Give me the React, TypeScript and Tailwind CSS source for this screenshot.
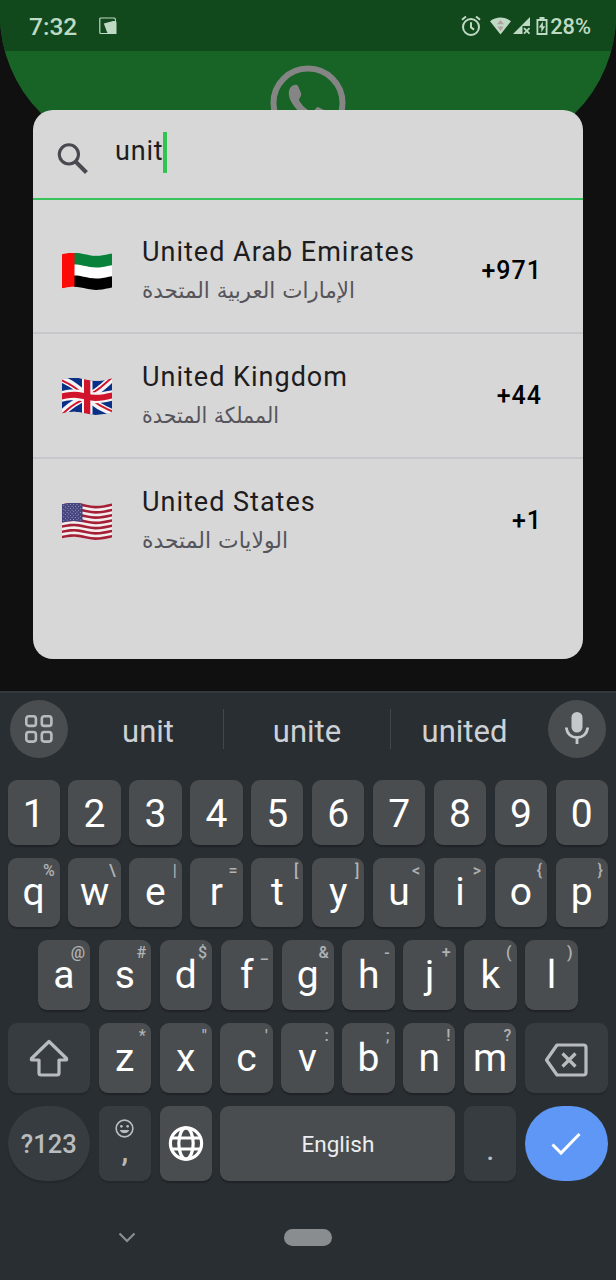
import React from "react";

type Pt = [number, number];

const lift = (x: number) => 1.3 - 1.6 * Math.sin((2 * Math.PI * x) / 46);

function wavy(points: Pt[], closed = true): string {
  const src = closed ? [...points, points[0]] : points;
  const out: string[] = [];
  for (let i = 0; i < src.length - 1; i++) {
    for (let s = 0; s <= 12; s++) {
      const x = src[i][0] + ((src[i + 1][0] - src[i][0]) * s) / 12;
      const y = src[i][1] + ((src[i + 1][1] - src[i][1]) * s) / 12;
      out.push(`${x.toFixed(2)} ${(y + lift(x)).toFixed(2)}`);
    }
  }
  return "M" + out.join("L") + (closed ? "Z" : "");
}

const box = (x: number, y: number, w: number, h: number): string =>
  wavy([[x, y], [x + w, y], [x + w, y + h], [x, y + h]]);

function FlagUAE() {
  return (
    <svg viewBox="0 0 50 38" preserveAspectRatio="none" className="h-[37px] w-[50px]">
      <path d={box(0, 0, 50, 35)} fill="#fff" />
      <path d={box(12, 0, 38, 12)} fill="#08823a" />
      <path d={box(12, 23.3, 38, 11.7)} fill="#000" />
      <path d={box(0, 0, 12.5, 35)} fill="#fb0a08" />
    </svg>
  );
}

function FlagUK() {
  return (
    <svg viewBox="0 0 50 38" preserveAspectRatio="none" className="h-[37px] w-[50px]">
      <clipPath id="uk-cloth"><path d={box(0, 0, 50, 35)} /></clipPath>
      <g clipPath="url(#uk-cloth)" fill="none">
        <path d={box(0, 0, 50, 35)} fill="#0a2f86" />
        <path d={wavy([[0, 0], [50, 35]], false)} stroke="#f4f4f4" strokeWidth="7" />
        <path d={wavy([[50, 0], [0, 35]], false)} stroke="#f4f4f4" strokeWidth="7" />
        <path d={wavy([[0, 1.2], [23, 17.3]], false)} stroke="#d0142c" strokeWidth="2" />
        <path d={wavy([[27, 17.7], [50, 33.8]], false)} stroke="#d0142c" strokeWidth="2" />
        <path d={wavy([[50, -1], [27, 15]], false)} stroke="#d0142c" strokeWidth="2" />
        <path d={wavy([[23, 20], [0, 36]], false)} stroke="#d0142c" strokeWidth="2" />
        <path d={box(0, 12, 50, 11)} fill="#f4f4f4" />
        <path d={box(20, 0, 10.5, 35)} fill="#f4f4f4" />
        <path d={box(0, 14.4, 50, 6.3)} fill="#d0142c" />
        <path d={box(22, 0, 6.3, 35)} fill="#d0142c" />
      </g>
    </svg>
  );
}

function FlagUS() {
  const h = 35 / 13;
  const stars: Pt[] = [];
  for (let r = 0; r < 9; r++)
    for (let c = 0; c < (r % 2 ? 5 : 6); c++) stars.push([1.8 + (r % 2 ? 1.65 : 0) + c * 3.3, 1.6 + r * 1.95]);
  return (
    <svg viewBox="0 0 50 38" preserveAspectRatio="none" className="h-[37px] w-[50px]">
      <path d={box(0, 0, 50, 35)} fill="#f2eeee" />
      {[0, 2, 4, 6, 8, 10, 12].map((i) => (
        <path key={i} d={box(0, i * h, 50, h)} fill="#a51f36" />
      ))}
      <path d={box(0, 0, 20.5, h * 7)} fill="#45457f" />
      {stars.map(([x, y], i) => (
        <circle key={i} cx={x} cy={y + lift(x)} r="0.5" fill="#d5d5e8" />
      ))}
    </svg>
  );
}

function StatusBar() {
  return (
    <div className="flex h-[51px] w-full items-center bg-[#11481c] pt-[3px] text-[#bfdac4]">
      <span className="ml-[29px] w-[70px] text-[24.500px] font-medium leading-none">7:32</span>
      <svg viewBox="0 0 18 18" className="-mt-[2px] h-[18px] w-[18px]" fill="none">
        <rect x="0.800" y="1" width="15.500" height="15.500" rx="1" stroke="currentColor" strokeWidth="1.200" />
        <path d="M4.800 6.500L16 3.500L17.500 5V17H8.800Z" fill="currentColor" />
        <path d="M3 2.800h9l4 .8" stroke="#11481c" strokeWidth="1" />
      </svg>
      <div className="ml-auto mr-[25px] flex items-center">
        <svg viewBox="0 0 20 22" className="-mt-[2px] mr-[9px] h-[22px] w-5" fill="none" stroke="currentColor" strokeWidth="2">
          <circle cx="10" cy="12" r="8" />
          <path d="M10 7.200v5.200l3 2.200M1 4.800L5 1.400M19 4.800L15 1.400" />
        </svg>
        <svg viewBox="0 0 21 18" className="-mt-[2px] mr-[2px] h-[18px] w-[21px]">
          <path d="M0 4.200C6-.8 15-.8 21 4.200L10.500 17.500Z" fill="currentColor" />
          <path d="M10.500 3l3.400 4.200H7.100ZM7.500 9.500h6L10.500 14Z" fill="#b69da2" />
        </svg>
        <svg viewBox="0 0 18 18" className="-mt-[2px] mr-[5px] h-[18px] w-[18px]">
          <path d="M17 0V9H9.500V17H0Z" fill="currentColor" />
          <path d="M11 11.200l5.500 5.500M16.500 11.200L11 16.700" stroke="currentColor" strokeWidth="1.800" />
        </svg>
        <svg viewBox="0 0 12 18" className="-mt-[2px] mr-[2px] h-[18px] w-[12px]">
          <path d="M3.500 0h5v2H11.500v16H0.500V2H3.500Z" fill="currentColor" />
          <path d="M2.300 4h7.400v12H2.300Z" fill="#11481c" />
          <path d="M6.900 4.500L2.800 10.500H5.300V15.500L9.200 9.200H6.900Z" fill="currentColor" />
        </svg>
        <span className="text-[21.800px] font-medium leading-none">28%</span>
      </div>
    </div>
  );
}

interface Country {
  name: string;
  native: string;
  code: string;
  width: string;
  flag: React.ReactNode;
}

const countries: Country[] = [
  { name: "United Arab Emirates", native: "الإمارات العربية المتحدة", code: "+971", width: "213", flag: <FlagUAE /> },
  { name: "United Kingdom", native: "المملكة المتحدة", code: "+44", width: "137", flag: <FlagUK /> },
  { name: "United States", native: "الولايات المتحدة", code: "+1", width: "146", flag: <FlagUS /> },
];

function CountryDialog() {
  return (
    <section className="relative mx-[33px] mt-[59px] h-[549px] overflow-hidden rounded-[20px] bg-[#d7d7d7]">
      <div className="flex h-[90px] items-start border-b-2 border-[#36c35a]">
        <svg viewBox="0 0 30 30" className="ml-[24px] mt-[33px] h-[31px] w-[31px]" fill="none" stroke="#4a4950">
          <circle cx="11.500" cy="11" r="9.300" strokeWidth="3" />
          <path d="M18 18L28.500 28.500" strokeWidth="4" />
        </svg>
        <div className="ml-[27px] mt-[22px] flex h-[41px] items-start">
          <span className="text-[27px] leading-[39px] tracking-[0.800px] text-[#1d1c20]">unit</span>
          <span className="h-[41px] w-[4px] bg-[#2fc54f]" />
        </div>
      </div>
      <ul className="pt-[9px]">
        {countries.map((c, i) => (
          <li key={c.code} className={i < 2 ? "flex h-[125px] items-start border-b-2 border-[#c6c6cb]" : "flex h-[125px] items-start"}>
            <div className="ml-[29px] mt-[44px] w-[80px]">{c.flag}</div>
            <div className="flex flex-1 flex-col">
              <span className="mt-[27px] whitespace-nowrap text-[27px] leading-[32px] tracking-[1px] text-[#1d1c20]">{c.name}</span>
              <svg className="mt-[6px] h-[36px] w-[230px] overflow-visible">
                <text x="0" y="24" direction="ltr" textLength={c.width} lengthAdjust="spacingAndGlyphs" className="fill-[#55545b] font-['DejaVu_Sans',sans-serif] text-[22px]">{c.native}</text>
              </svg>
            </div>
            <span className="mr-[41px] mt-[47px] text-[25px] font-medium leading-[30px] tracking-[1px] text-black">{c.code}</span>
          </li>
        ))}
      </ul>
    </section>
  );
}

interface KeyProps {
  label: string;
  hint?: string;
}

function Key({ label, hint }: KeyProps) {
  return (
    <button className={hint ? "relative flex h-full w-[52.300px] items-center justify-center rounded-[9px] bg-[#4a4d4f] text-[39px] leading-none text-white shadow-[0_2px_1px_#202428]" : "flex h-full w-[52.300px] items-center justify-center rounded-[9px] bg-[#4a4d4f] pt-[4px] text-[39px] leading-none text-white shadow-[0_2px_1px_#202428]"}>
      {label}
      {hint && <span className="absolute right-[5px] top-[4px] text-[16px] font-medium leading-[17px] text-[#b0b2b4]">{hint}</span>}
    </button>
  );
}

const rowTwo: [string, string][] = [["q", "%"], ["w", "\\"], ["e", "|"], ["r", "="], ["t", "["], ["y", "]"], ["u", "<"], ["i", ">"], ["o", "{"], ["p", "}"]];
const rowThree: [string, string][] = [["a", "@"], ["s", "#"], ["d", "$"], ["f", "_"], ["g", "&"], ["h", "-"], ["j", "+"], ["k", "("], ["l", ")"]];
const rowFour: [string, string][] = [["z", "*"], ["x", "\""], ["c", "'"], ["v", ":"], ["b", ";"], ["n", "!"], ["m", "?"]];

function Keyboard() {
  return (
    <section className="mt-auto h-[589px] border-t-2 border-[#34393e] bg-[#292e32]">
      <div className="flex h-[72px] items-center px-[10px]">
        <div className="flex h-[58px] w-[58px] items-center justify-center rounded-full bg-[#4a4d4f]">
          <svg viewBox="0 0 28 28" className="h-7 w-7" fill="none" stroke="#b9bcbf" strokeWidth="2.600">
            <rect x="1.300" y="1.300" width="9.600" height="9.600" rx="2.500" />
            <rect x="16.800" y="1.300" width="9.600" height="9.600" rx="2.500" />
            <rect x="1.300" y="17" width="9.600" height="9.600" rx="2.500" />
            <rect x="16.800" y="17" width="9.600" height="9.600" rx="2.500" />
          </svg>
        </div>
        <div className="flex h-[40px] flex-1 items-center text-[31px] leading-none text-[#cdd1d5]">
          <span className="ml-[3px] w-[152px] pl-[2px] pt-[4px] text-center">unit</span>
          <span className="h-[40px] w-px bg-[#43474b]" />
          <span className="w-[166px] pt-[4px] text-center">unite</span>
          <span className="h-[40px] w-px bg-[#43474b]" />
          <span className="w-[147px] pt-[4px] text-center">united</span>
        </div>
        <div className="flex h-[58px] w-[58px] items-center justify-center rounded-full bg-[#4a4d4f]">
          <svg viewBox="0 0 24 34" className="h-[34px] w-6" fill="none">
            <rect x="6.500" y="0" width="11" height="20.500" rx="5.500" fill="#c5c8ca" />
            <path d="M1.300 15.500C1.800 22 6.500 25.500 12 25.500S22.200 22 22.700 15.500M12 25.500V32" stroke="#c5c8ca" strokeWidth="2.800" />
          </svg>
        </div>
      </div>
      <div className="flex flex-col pl-[7.500px] pr-[8px] pt-[15px]">
        <div className="flex h-[65px] justify-between">
          {"1234567890".split("").map((n) => <Key key={n} label={n} />)}
        </div>
        <div className="mt-[12.500px] flex h-[69.500px] justify-between">
          {rowTwo.map(([a, b]) => <Key key={a} label={a} hint={b} />)}
        </div>
        <div className="mt-[13px] flex h-[70px] justify-between px-[30.300px]">
          {rowThree.map(([a, b]) => <Key key={a} label={a} hint={b} />)}
        </div>
        <div className="mt-[13px] flex h-[70px] justify-between">
          <button className="flex w-[82.500px] items-center justify-center rounded-[9px] bg-[#373c40] shadow-[0_2px_1px_#24282c]">
            <svg viewBox="0 0 40 38" className="h-[38px] w-10" fill="none" stroke="#b9bcbf" strokeWidth="3.200" strokeLinejoin="round">
              <path d="M20 2.500L2.500 19.500Q2 21 3 21H10V34Q10 36 12 36H28Q30 36 30 34V21H37Q38 21 37.500 19.500Z" />
            </svg>
          </button>
          {rowFour.map(([a, b]) => <Key key={a} label={a} hint={b} />)}
          <button className="flex w-[83px] items-center justify-center rounded-[9px] bg-[#373c40] shadow-[0_2px_1px_#24282c]">
            <svg viewBox="0 0 44 34" className="mt-[3px] h-[34px] w-11" fill="none" stroke="#b9bcbf" strokeWidth="3.200" strokeLinejoin="round">
              <path d="M13 2H39.500Q42 2 42 4.500V29.500Q42 32 39.500 32H13L2.500 17Z" />
              <path d="M18.500 10.500L31.500 23.500M31.500 10.500L18.500 23.500" />
            </svg>
          </button>
        </div>
        <div className="mt-[13px] flex h-[75px] justify-between">
          <button className="w-[82.500px] rounded-[41px] bg-[#373c40] pt-[2px] text-[25.500px] font-medium text-[#b9bcbf] shadow-[0_2px_1px_#24282c]">?123</button>
          <button className="flex w-[52.300px] flex-col items-center rounded-[9px] bg-[#373c40] shadow-[0_2px_1px_#24282c]">
            <svg viewBox="0 0 20 20" className="mt-[13px] h-[19px] w-[19px]" fill="none" stroke="#b9bcbf" strokeWidth="1.700">
              <circle cx="10" cy="10" r="8.800" />
              <circle cx="6.700" cy="7.700" r="1.400" fill="#b9bcbf" stroke="none" />
              <circle cx="13.300" cy="7.700" r="1.400" fill="#b9bcbf" stroke="none" />
              <path d="M5 11.500H15A5.200 4.500 0 0 1 5 11.500Z" fill="#b9bcbf" stroke="none" />
            </svg>
            <span className="-mt-[3px] text-[30px] font-medium leading-[32px] text-[#b9bcbf]">,</span>
          </button>
          <button className="flex w-[52.300px] items-center justify-center rounded-[9px] bg-[#4a4d4f] shadow-[0_2px_1px_#202428]">
            <svg viewBox="0 0 36 36" className="h-9 w-9" fill="none" stroke="#fff" strokeWidth="3.200">
              <circle cx="18" cy="17.500" r="15.600" />
              <ellipse cx="18" cy="17.500" rx="7.200" ry="15.600" />
              <path d="M3.500 12H32.500M3.500 23H32.500" />
            </svg>
          </button>
          <button className="w-[235px] rounded-[9px] bg-[#4a4d4f] pt-[2px] text-[22.500px] text-[#eceeef] shadow-[0_2px_1px_#202428]">English</button>
          <button className="flex w-[52.300px] items-end justify-center rounded-[9px] bg-[#373c40] pb-[14px] text-[27px] font-medium leading-[32px] text-[#b9bcbf] shadow-[0_2px_1px_#24282c]">.</button>
          <button className="flex w-[83px] items-center justify-center rounded-[41px] bg-[#5e97f6]">
            <svg viewBox="0 0 30 24" className="h-6 w-[30px]" fill="none" stroke="#fff" strokeWidth="3">
              <path d="M1.500 12.500L10 21L28.500 2" />
            </svg>
          </button>
        </div>
      </div>
      <div className="flex items-center pl-[118px] pt-[48px]">
        <svg viewBox="0 0 18 12" className="h-3 w-[18px]" fill="none" stroke="#8a8e91" strokeWidth="2.200">
          <path d="M1.500 1.500L9 9L16.500 1.500" />
        </svg>
        <span className="ml-[148px] h-[17px] w-[48px] rounded-full bg-[#898d90]" />
      </div>
    </section>
  );
}

export default function App() {
  return (
    <main className="relative flex h-[1280px] w-[616px] flex-col overflow-hidden bg-[#101010] font-[Roboto,sans-serif]">
      <div className="absolute left-0 top-0 h-[153px] w-full overflow-hidden rounded-b-[138px] bg-[#186426]">
        <StatusBar />
        <svg viewBox="0 0 76 76" className="mx-auto mt-[14px] h-[76px] w-[76px]" fill="none">
          <circle cx="38" cy="38" r="34.500" stroke="#858585" strokeWidth="6" />
          <path d="M24 20C18 22 17 30 22 38C29 50 43 58 52 55C58 52 58 47 56 46L48 42C46 42 44 47 42 47C36 45 30 38 29 35C29 33 32 31 31 28L28 21Q27 19 24 20Z" fill="#858585" />
        </svg>
      </div>
      <div className="h-[51px] shrink-0" />
      <CountryDialog />
      <Keyboard />
    </main>
  );
}
